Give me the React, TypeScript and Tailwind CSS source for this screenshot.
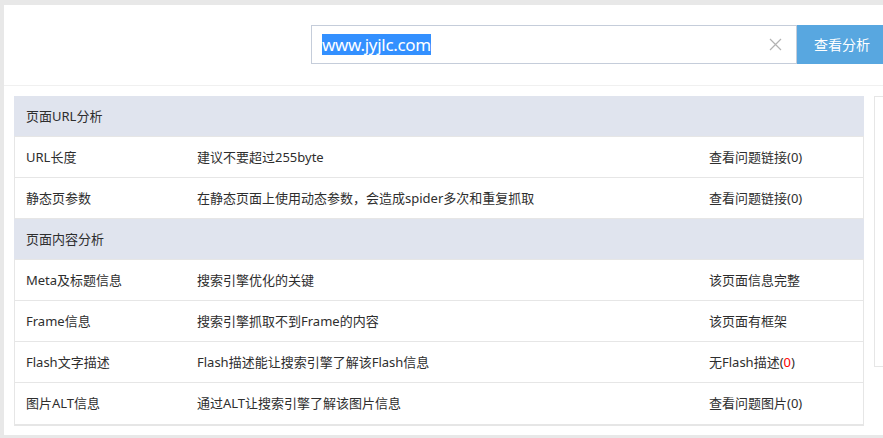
const font = { fontFamily: '"Noto Sans", "Noto Sans CJK SC", sans-serif' };

type Row = { name: string; desc: string; result: React.ReactNode };

const urlRows: Row[] = [
  { name: 'URL长度', desc: '建议不要超过255byte', result: '查看问题链接(0)' },
  { name: '静态页参数', desc: '在静态页面上使用动态参数，会造成spider多次和重复抓取', result: '查看问题链接(0)' },
];

const contentRows: Row[] = [
  { name: 'Meta及标题信息', desc: '搜索引擎优化的关键', result: '该页面信息完整' },
  { name: 'Frame信息', desc: '搜索引擎抓取不到Frame的内容', result: '该页面有框架' },
  {
    name: 'Flash文字描述',
    desc: 'Flash描述能让搜索引擎了解该Flash信息',
    result: (
      <>
        无Flash描述(<span className="text-[#ff0000]">0</span>)
      </>
    ),
  },
  { name: '图片ALT信息', desc: '通过ALT让搜索引擎了解该图片信息', result: '查看问题图片(0)' },
];

function SectionRow({ title }: { title: string }) {
  return (
    <div className="h-[41px] flex items-center pl-[12px] pt-[1px] bg-[#e0e4ee] border-b border-[#e6e6e6]">
      {title}
    </div>
  );
}

function DataRow({ row, last }: { row: Row; last?: boolean }) {
  return (
    <div
      className={
        last
          ? 'h-[41px] flex items-center pl-[11px] pt-[1px] border-x border-[#e6e6e6]'
          : 'h-[41px] flex items-center pl-[11px] pt-[1px] border-x border-b border-[#e6e6e6]'
      }
    >
      <div className="w-[171px] shrink-0">{row.name}</div>
      <div className="w-[512px] shrink-0">{row.desc}</div>
      <div>{row.result}</div>
    </div>
  );
}

export default function App() {
  return (
    <div className="h-[438px] w-full overflow-hidden bg-[#e8e8e8] pt-[5px] pl-[4px]" style={font}>
      <div className="bg-white h-[430px]">
        {/* search bar */}
        <div className="h-[81px] border-b border-[#f0f0f0] pt-[20px] pl-[307px] overflow-hidden">
          <div className="flex h-[39px] w-[600px]">
            <div className="w-[486px] h-full border border-[#c5cdda] flex items-center pl-[10px] pr-[14px]">
              <span className="bg-[#3390ff] text-white text-[17px] leading-[21px] tracking-[-0.3px]">
                www.jyjlc.com
              </span>
              <svg className="ml-auto" width="13" height="13" viewBox="0 0 13 13">
                <path d="M1 1L12 12M12 1L1 12" stroke="#b3b3b3" strokeWidth="1.2" />
              </svg>
            </div>
            <div className="w-[90px] h-full bg-[#58a7e0] text-white text-[14px] flex items-center justify-center">
              查看分析
            </div>
          </div>
        </div>

        {/* content */}
        <div className="flex gap-[10px] pt-[10px] pl-[10px] text-[13px] text-[#2e2e2e]">
          <div className="w-[850px] shrink-0 border-b-2 border-[#e6e6e6]">
            <SectionRow title="页面URL分析" />
            {urlRows.map((r) => (
              <DataRow key={r.name} row={r} />
            ))}
            <SectionRow title="页面内容分析" />
            {contentRows.map((r, i) => (
              <DataRow key={r.name} row={r} last={i === contentRows.length - 1} />
            ))}
          </div>
          <div className="flex-1 h-[271px] border-l border-t border-b border-[#e6e6e6]" />
        </div>
      </div>
    </div>
  );
}
